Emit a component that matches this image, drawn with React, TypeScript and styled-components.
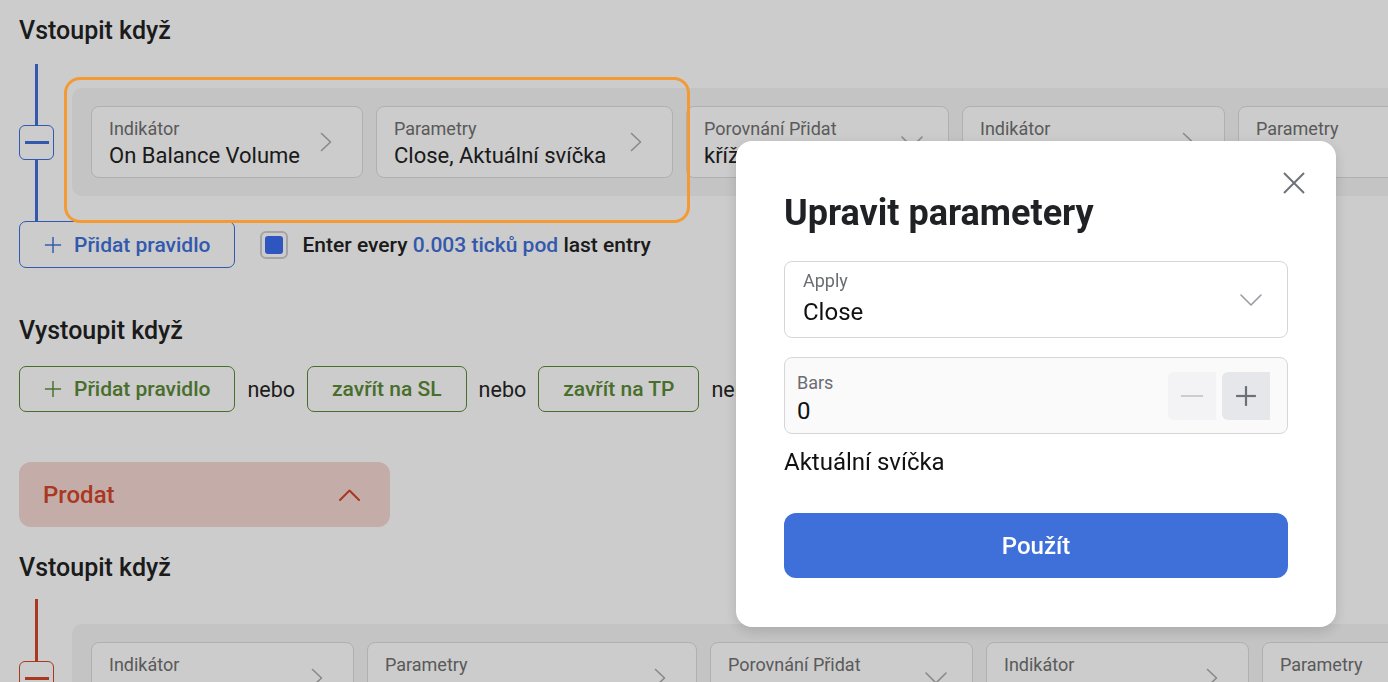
import React from 'react';
import styled, { createGlobalStyle } from 'styled-components';

const blue = '#3f70d9';
const green = '#5b8a36';
const red = '#d4452a';

const GlobalStyle = createGlobalStyle`
  html, body {
    margin: 0;
    padding: 0;
    overflow: hidden;
    background: #ffffff;
    font-family: Roboto, "Noto Sans", "Liberation Sans", sans-serif;
    color: #222222;
  }
  * { box-sizing: border-box; }
`;

// ページ全体
const Page = styled.div`
  display: flex;
  flex-direction: column;
  align-items: flex-start;
  padding: 16px 0 0 19px;
  width: 100vw;
  height: 100vh;
  overflow: hidden;
  & > * {
    flex-shrink: 0;
  }
`;

// 見出し
const Title = styled.h2<{ $mt?: number }>`
  margin: ${p => p.$mt ?? 0}px 0 0;
  font-size: 25px;
  line-height: 30px;
  font-weight: 500;
  color: #222222;
`;

// ルール行(レール+グループ)
const RuleRow = styled.div<{ $mt: number }>`
  position: relative;
  display: flex;
  gap: 18px;
  width: 100%;
  margin-top: ${p => p.$mt}px;
`;

const Rail = styled.div`
  display: flex;
  flex-direction: column;
  align-items: center;
  width: 35px;
  flex-shrink: 0;
`;

const RailLine = styled.div<{ $color: string }>`
  flex: 1;
  width: 3px;
  background: ${p => p.$color};
`;

const MinusBox = styled.div<{ $color: string }>`
  width: 35px;
  height: 35px;
  flex-shrink: 0;
  border: 1px solid ${p => p.$color};
  border-radius: 6px;
  background: #ffffff;
  display: flex;
  align-items: center;
  justify-content: center;
  &::after {
    content: '';
    width: 24px;
    height: 3px;
    background: ${p => p.$color};
  }
`;

const Group = styled.div<{ $top: number; $bottom: number }>`
  flex: 1;
  min-width: 0;
  display: flex;
  gap: 13px;
  margin: ${p => p.$top}px -40px ${p => p.$bottom}px 0;
  padding: 18px 19px;
  background: #f5f5f5;
  border-radius: 10px;
  overflow: hidden;
`;

const Card = styled.div<{ $w: number }>`
  width: ${p => p.$w}px;
  height: 72px;
  flex-shrink: 0;
  display: flex;
  justify-content: space-between;
  padding: 11px 25px 0 17px;
  background: #ffffff;
  border: 1px solid #dcdcdc;
  border-radius: 8px;
  overflow: hidden;
`;

const CardText = styled.div`
  display: flex;
  flex-direction: column;
  white-space: nowrap;
`;

const Label = styled.span`
  font-size: 18px;
  line-height: 22px;
  color: #717171;
`;

const Value = styled.span`
  margin-top: 3px;
  font-size: 22px;
  line-height: 26px;
  color: #222222;
`;

const ChevronBox = styled.div`
  width: 22px;
  align-self: center;
  display: flex;
  justify-content: center;
  flex-shrink: 0;
  margin-top: -11px;
`;

// ツアーのハイライト枠
const Highlight = styled.div`
  position: absolute;
  left: 45px;
  top: 13px;
  width: 626px;
  height: 146px;
  border: 3px solid #f39a35;
  border-radius: 16px;
  z-index: 20;
  pointer-events: none;
`;

const ActionRow = styled.div<{ $gap: number; $mt?: number }>`
  display: flex;
  align-items: center;
  gap: ${p => p.$gap}px;
  margin-top: ${p => p.$mt ?? 0}px;
`;

const OutlineButton = styled.button<{ $color: string; $h: number }>`
  display: flex;
  align-items: center;
  gap: 12px;
  height: ${p => p.$h}px;
  padding: 0 24px;
  background: #ffffff;
  border: 1px solid ${p => p.$color};
  border-radius: 7px;
  color: ${p => p.$color};
  font-family: inherit;
  font-size: 21px;
  font-weight: 500;
  white-space: nowrap;
  flex-shrink: 0;
`;

const Check = styled.div`
  width: 28px;
  height: 28px;
  padding: 3px;
  border: 2px solid #cdcdcd;
  border-radius: 6px;
  flex-shrink: 0;
  &::after {
    content: '';
    display: block;
    width: 100%;
    height: 100%;
    border-radius: 3px;
    background: #3b6cf0;
  }
`;

const CheckLabel = styled.label`
  display: flex;
  align-items: center;
  gap: 14px;
  font-size: 21px;
  font-weight: 500;
  white-space: nowrap;
`;

const Accent = styled.span`
  color: ${blue};
`;

const Or = styled.span`
  font-size: 21.5px;
  color: #262626;
  flex-shrink: 0;
`;

const SidePanel = styled.div`
  display: flex;
  align-items: center;
  justify-content: space-between;
  width: 371px;
  height: 65px;
  margin-top: 50px;
  padding: 0 30px 0 24px;
  background: #f5d9d4;
  border-radius: 12px;
  color: ${red};
  font-size: 24px;
  font-weight: 500;
`;

// オーバーレイ
const Backdrop = styled.div`
  position: fixed;
  inset: 0;
  background: rgba(0, 0, 0, 0.2);
  z-index: 10;
`;

// モーダル
const Modal = styled.div`
  position: fixed;
  left: 736px;
  top: 141px;
  width: 600px;
  padding: 50px 48px 49px;
  background: #ffffff;
  border-radius: 16px;
  box-shadow: 0 4px 14px rgba(0, 0, 0, 0.14);
  z-index: 30;
  display: flex;
  flex-direction: column;
`;

const CloseButton = styled.button`
  position: absolute;
  top: 31px;
  right: 31px;
  width: 22px;
  height: 22px;
  padding: 0;
  border: none;
  background: none;
  display: flex;
`;

const ModalTitle = styled.h1`
  margin: 0 0 26px;
  font-size: 36px;
  line-height: 44px;
  font-weight: 700;
  color: #1f2125;
`;

const Field = styled.div<{ $bg: string; $pad: string; $mt?: number }>`
  display: flex;
  align-items: center;
  justify-content: space-between;
  height: 77px;
  margin-top: ${p => p.$mt ?? 0}px;
  padding: ${p => p.$pad};
  background: ${p => p.$bg};
  border: 1px solid #d6d6da;
  border-radius: 8px;
`;

const FieldText = styled.div<{ $pt: number; $gap: number }>`
  display: flex;
  flex-direction: column;
  align-self: flex-start;
  padding-top: ${p => p.$pt}px;
  gap: ${p => p.$gap}px;
`;

const FieldLabel = styled.span`
  font-size: 18px;
  line-height: 22px;
  color: #6b6d72;
`;

const FieldValue = styled.span`
  font-size: 24px;
  line-height: 28px;
  color: #111111;
`;

const Steppers = styled.div`
  display: flex;
  gap: 6px;
`;

const StepButton = styled.button<{ $bg: string }>`
  width: 48px;
  height: 48px;
  padding: 0;
  border: none;
  border-radius: 6px 0 0 6px;
  background: ${p => p.$bg};
  display: flex;
  align-items: center;
  justify-content: center;
`;

const Note = styled.div`
  margin-top: 14px;
  font-size: 24px;
  line-height: 28px;
  color: #111111;
`;

const PrimaryButton = styled.button`
  margin-top: 37px;
  height: 65px;
  border: none;
  border-radius: 12px;
  background: ${blue};
  color: #ffffff;
  font-family: inherit;
  font-size: 24px;
  font-weight: 500;
`;

// アイコン
const ChevronRight = () => (
  <svg width="12" height="20" viewBox="0 0 12 20" fill="none">
    <polyline points="1.5,1.5 10.5,10 1.5,18.5" stroke="#acacac" strokeWidth="1.6" strokeLinecap="round" strokeLinejoin="round" />
  </svg>
);

const ChevronDown = (props: { color: string }) => (
  <svg width="22" height="12" viewBox="0 0 22 12" fill="none">
    <polyline points="1,1 11,11 21,1" stroke={props.color} strokeWidth="1.6" strokeLinecap="round" strokeLinejoin="round" />
  </svg>
);

const ChevronUp = () => (
  <svg width="21" height="12" viewBox="0 0 21 12" fill="none">
    <polyline points="1,11 10.5,1.5 20,11" stroke={red} strokeWidth="2" strokeLinecap="round" strokeLinejoin="round" />
  </svg>
);

const PlusIcon = (props: { color: string; size: number; width?: number }) => (
  <svg width={props.size} height={props.size} viewBox="0 0 20 20" fill="none">
    <line x1="10" y1="1" x2="10" y2="19" stroke={props.color} strokeWidth={props.width ?? 1.6} />
    <line x1="1" y1="10" x2="19" y2="10" stroke={props.color} strokeWidth={props.width ?? 1.6} />
  </svg>
);

const MinusIcon = () => (
  <svg width="22" height="22" viewBox="0 0 22 22" fill="none">
    <line x1="0" y1="11" x2="22" y2="11" stroke="#cbccd0" strokeWidth="2" />
  </svg>
);

const CloseIcon = () => (
  <svg width="22" height="22" viewBox="0 0 22 22" fill="none">
    <line x1="1" y1="1" x2="21" y2="21" stroke="#6e727a" strokeWidth="2" />
    <line x1="21" y1="1" x2="1" y2="21" stroke="#6e727a" strokeWidth="2" />
  </svg>
);

type CardData = { label: string; value?: string; width: number; down?: boolean };

const RuleCard = (props: CardData) => (
  <Card $w={props.width}>
    <CardText>
      <Label>{props.label}</Label>
      {props.value && <Value>{props.value}</Value>}
    </CardText>
    <ChevronBox>{props.down ? <ChevronDown color="#acacac" /> : <ChevronRight />}</ChevronBox>
  </Card>
);

const buyCards: CardData[] = [
  { label: 'Indikátor', value: 'On Balance Volume', width: 272 },
  { label: 'Parametry', value: 'Close, Aktuální svíčka', width: 297 },
  { label: 'Porovnání Přidat', value: 'kříží nad', width: 263, down: true },
  { label: 'Indikátor', value: 'SMA', width: 263 },
  { label: 'Parametry', value: 'Close', width: 263 },
];

// 下段のカードは値が画面外にあるのでラベルのみ
const sellCards: CardData[] = [
  { label: 'Indikátor', width: 263 },
  { label: 'Parametry', width: 330 },
  { label: 'Porovnání Přidat', width: 263, down: true },
  { label: 'Indikátor', width: 263 },
  { label: 'Parametry', width: 263 },
];

const App = () => {
  return (
    <>
      <GlobalStyle />
      <Page>
        <Title>Vstoupit když</Title>
        <RuleRow $mt={18}>
          <Rail>
            <RailLine $color={blue} />
            <MinusBox $color={blue} />
            <RailLine $color={blue} />
          </Rail>
          <Group $top={24} $bottom={25}>
            {buyCards.map((c, i) => <RuleCard key={i} {...c} />)}
          </Group>
          <Highlight />
        </RuleRow>
        <ActionRow $gap={25}>
          <OutlineButton $color={blue} $h={47}>
            <PlusIcon color={blue} size={18} />
            Přidat pravidlo
          </OutlineButton>
          <CheckLabel>
            <Check />
            <span>Enter every <Accent>0.003 ticků pod</Accent> last entry</span>
          </CheckLabel>
        </ActionRow>

        <Title $mt={48}>Vystoupit když</Title>
        <ActionRow $gap={12} $mt={20}>
          <OutlineButton $color={green} $h={46}>
            <PlusIcon color={green} size={18} />
            Přidat pravidlo
          </OutlineButton>
          <Or>nebo</Or>
          <OutlineButton $color={green} $h={46}>zavřít na SL</OutlineButton>
          <Or>nebo</Or>
          <OutlineButton $color={green} $h={46}>zavřít na TP</OutlineButton>
          <Or>nebo</Or>
        </ActionRow>

        <SidePanel>
          Prodat
          <ChevronUp />
        </SidePanel>

        <Title $mt={26}>Vstoupit když</Title>
        <RuleRow $mt={16}>
          <Rail>
            <RailLine $color={red} />
            <MinusBox $color={red} />
            <RailLine $color={red} />
          </Rail>
          <Group $top={25} $bottom={25}>
            {sellCards.map((c, i) => <RuleCard key={i} {...c} />)}
          </Group>
        </RuleRow>
      </Page>

      <Backdrop />

      <Modal>
        <CloseButton aria-label="Zavřít">
          <CloseIcon />
        </CloseButton>
        <ModalTitle>Upravit parametery</ModalTitle>
        <Field $bg="#ffffff" $pad="0 25px 0 18px">
          <FieldText $pt={8} $gap={6}>
            <FieldLabel>Apply</FieldLabel>
            <FieldValue>Close</FieldValue>
          </FieldText>
          <ChevronDown color="#9a9ca3" />
        </Field>
        <Field $bg="#fafafa" $pad="0 17px 0 12px" $mt={19}>
          <FieldText $pt={14} $gap={3}>
            <FieldLabel>Bars</FieldLabel>
            <FieldValue>0</FieldValue>
          </FieldText>
          <Steppers>
            <StepButton $bg="#f3f3f5"><MinusIcon /></StepButton>
            <StepButton $bg="#e6e7ea"><PlusIcon color="#6b6f76" size={22} width={2} /></StepButton>
          </Steppers>
        </Field>
        <Note>Aktuální svíčka</Note>
        <PrimaryButton>Použít</PrimaryButton>
      </Modal>
    </>
  );
};

export default App;
